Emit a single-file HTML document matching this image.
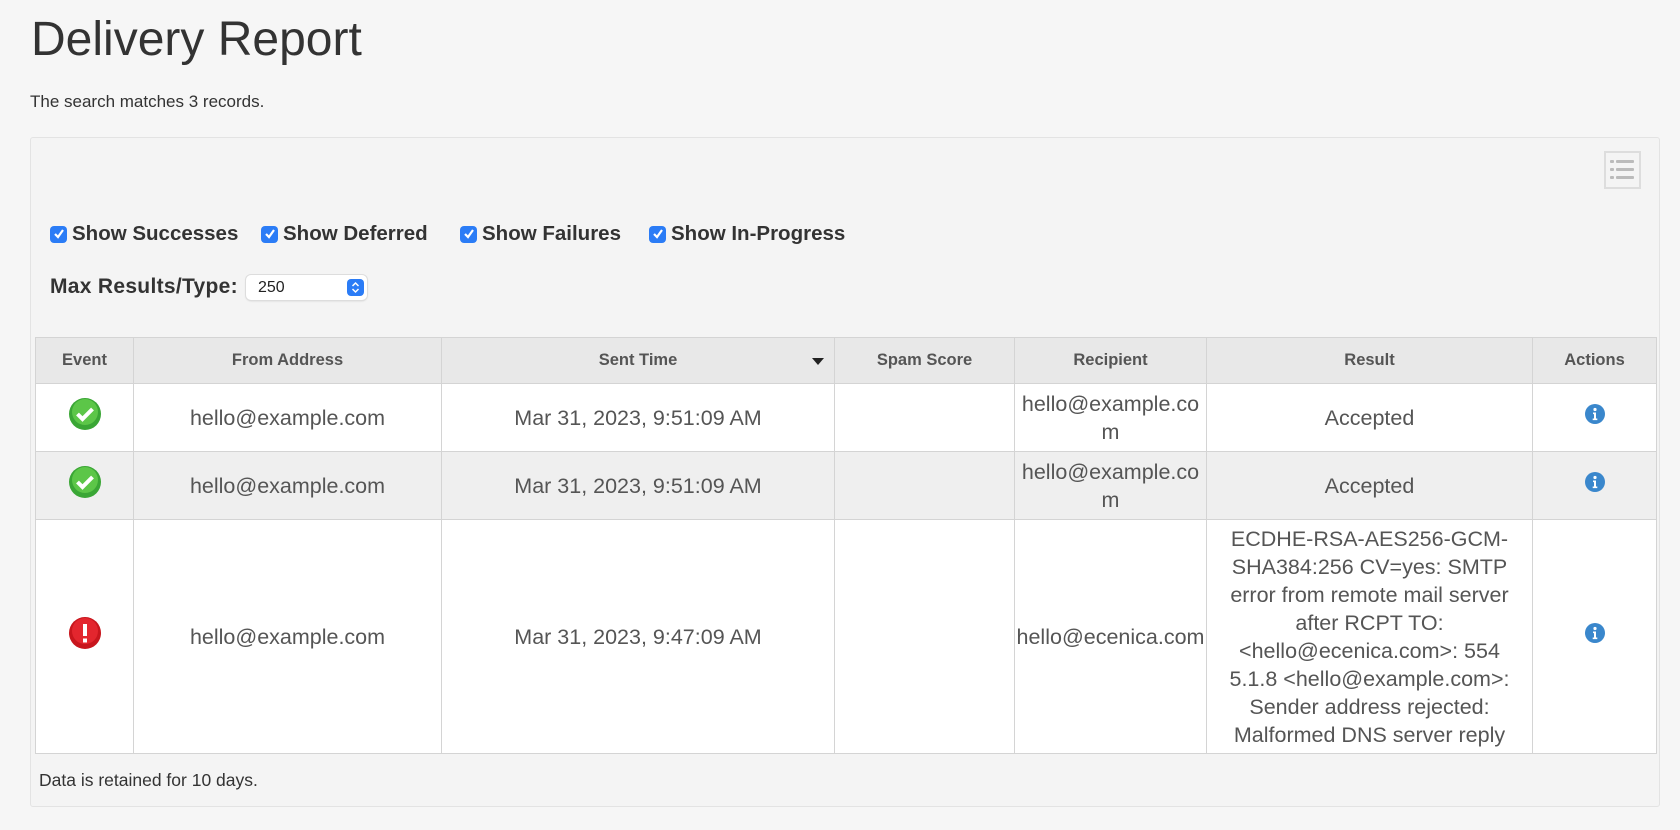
<!DOCTYPE html>
<html><head><meta charset="utf-8"><style>
*{box-sizing:border-box;margin:0;padding:0}
body{width:1680px;height:830px;background:#f6f6f6;font-family:"Liberation Sans",sans-serif;color:#333;position:relative;overflow:hidden}
h1{position:absolute;left:31px;top:12px;font-weight:normal;font-size:48px;color:#333;letter-spacing:0}
.sub{position:absolute;left:30px;top:92px;font-size:17px;color:#333}
.panel{position:absolute;left:30px;top:137px;width:1630px;height:670px;background:#f4f4f4;border:1px solid #e3e3e3;border-radius:3px}
.lb{position:absolute;left:1604px;top:151px;width:37px;height:38px;border:2px solid #ddd;background:#f4f4f4}
.chk{position:absolute;top:222px;font-size:20.5px;font-weight:bold;color:#333;display:flex;align-items:center}
.cb{width:17px;height:17px;background:#2b7cf6;border-radius:4px;margin-right:5px;display:inline-flex;align-items:center;justify-content:center}
.mx{position:absolute;left:50px;top:275px;font-size:21px;font-weight:bold;color:#333;letter-spacing:.3px}
.sel{position:absolute;left:246px;top:275px;width:121px;height:25px;background:#fff;border-radius:5px;box-shadow:0 0 0 1px #ddd,0 1px 2px rgba(0,0,0,.15);font-size:16px;padding:4px 12px;color:#222}
.sel i{position:absolute;right:3px;top:4px;width:17px;height:17px;background:#2b7cf6;border-radius:4px}
table{position:absolute;left:35px;top:337px;border-collapse:collapse;background:#fff;table-layout:fixed}
td,th{border:1px solid #d4d4d4;text-align:center;vertical-align:middle}
th{background:#e8e8e8;height:46px;font-size:16.5px;color:#555;font-weight:bold}
td{font-size:21.5px;color:#555;line-height:28px}
tr.r2 td{background:#efefef}
.foot{position:absolute;left:39px;top:770px;font-size:17.5px;color:#333}
</style></head><body>
<h1>Delivery Report</h1>
<div class="sub">The search matches 3 records.</div>
<div class="panel"></div>
<div class="lb"><svg width="33" height="34" viewBox="0 0 33 34"><g fill="#bbb"><rect x="4" y="7" width="4" height="3" rx="1"/><rect x="10" y="7" width="18" height="3" rx="1"/><rect x="4" y="15" width="4" height="3" rx="1"/><rect x="10" y="15" width="18" height="3" rx="1"/><rect x="4" y="23" width="4" height="3" rx="1"/><rect x="10" y="23" width="18" height="3" rx="1"/></g></svg></div>
<div class="chk" style="left:50px"><span class="cb"><svg width="12" height="12"><path d="M2 6l3 3 5-7" stroke="#fff" stroke-width="2.2" fill="none"/></svg></span>Show Successes</div>
<div class="chk" style="left:261px"><span class="cb"><svg width="12" height="12"><path d="M2 6l3 3 5-7" stroke="#fff" stroke-width="2.2" fill="none"/></svg></span>Show Deferred</div>
<div class="chk" style="left:460px"><span class="cb"><svg width="12" height="12"><path d="M2 6l3 3 5-7" stroke="#fff" stroke-width="2.2" fill="none"/></svg></span>Show Failures</div>
<div class="chk" style="left:649px"><span class="cb"><svg width="12" height="12"><path d="M2 6l3 3 5-7" stroke="#fff" stroke-width="2.2" fill="none"/></svg></span>Show In-Progress</div>
<div class="mx">Max Results/Type:</div>
<div class="sel">250<i><svg width="17" height="17"><path d="M5.5 7l3-3 3 3M5.5 10l3 3 3-3" stroke="#fff" stroke-width="1.5" fill="none"/></svg></i></div>
<table>
<colgroup><col style="width:98px"><col style="width:308px"><col style="width:393px"><col style="width:180px"><col style="width:192px"><col style="width:326px"><col style="width:124px"></colgroup>
<tr><th>Event</th><th>From Address</th><th style="position:relative">Sent Time<svg style="position:absolute;right:10px;top:20px" width="12" height="7"><path d="M0 0h12L6 7z" fill="#222"/></svg></th><th>Spam Score</th><th>Recipient</th><th>Result</th><th>Actions</th></tr>
<tr style="height:68px"><td><svg width="34" height="34" viewBox="0 0 34 34"><circle cx="17" cy="17" r="16" fill="#3aa635"/><circle cx="17" cy="15" r="13" fill="#5cc648"/><path d="M9.5 17l5 5 10-10" stroke="#fff" stroke-width="4" fill="none"/></svg></td><td>hello@example.com</td><td>Mar 31, 2023, 9:51:09 AM</td><td></td><td>hello@example.co<br>m</td><td>Accepted</td><td><svg width="22" height="22" viewBox="0 0 22 22"><circle cx="11" cy="11" r="10" fill="#3a87cc"/><circle cx="11" cy="6.5" r="1.6" fill="#fff"/><path d="M9 9.5h3v6h1.3v1.6H8.7v-1.6H10v-4.4H9z" fill="#fff"/></svg></td></tr>
<tr class="r2" style="height:68px"><td><svg width="34" height="34" viewBox="0 0 34 34"><circle cx="17" cy="17" r="16" fill="#3aa635"/><circle cx="17" cy="15" r="13" fill="#5cc648"/><path d="M9.5 17l5 5 10-10" stroke="#fff" stroke-width="4" fill="none"/></svg></td><td>hello@example.com</td><td>Mar 31, 2023, 9:51:09 AM</td><td></td><td>hello@example.co<br>m</td><td>Accepted</td><td><svg width="22" height="22" viewBox="0 0 22 22"><circle cx="11" cy="11" r="10" fill="#3a87cc"/><circle cx="11" cy="6.5" r="1.6" fill="#fff"/><path d="M9 9.5h3v6h1.3v1.6H8.7v-1.6H10v-4.4H9z" fill="#fff"/></svg></td></tr>
<tr style="height:234px"><td><svg width="34" height="34" viewBox="0 0 34 34"><circle cx="17" cy="17" r="16" fill="#c8161d"/><circle cx="17" cy="15" r="13" fill="#e3262e"/><rect x="15" y="8" width="4" height="12" fill="#fff"/><rect x="15" y="22.5" width="4" height="4" fill="#fff"/></svg></td><td>hello@example.com</td><td>Mar 31, 2023, 9:47:09 AM</td><td></td><td>hello@ecenica.com</td><td>ECDHE-RSA-AES256-GCM-<br>SHA384:256 CV=yes: SMTP<br>error from remote mail server<br>after RCPT TO:<br>&lt;hello@ecenica.com&gt;: 554<br>5.1.8 &lt;hello@example.com&gt;:<br>Sender address rejected:<br>Malformed DNS server reply</td><td><svg width="22" height="22" viewBox="0 0 22 22"><circle cx="11" cy="11" r="10" fill="#3a87cc"/><circle cx="11" cy="6.5" r="1.6" fill="#fff"/><path d="M9 9.5h3v6h1.3v1.6H8.7v-1.6H10v-4.4H9z" fill="#fff"/></svg></td></tr>
</table>
<div class="foot">Data is retained for 10 days.</div>
</body></html>
